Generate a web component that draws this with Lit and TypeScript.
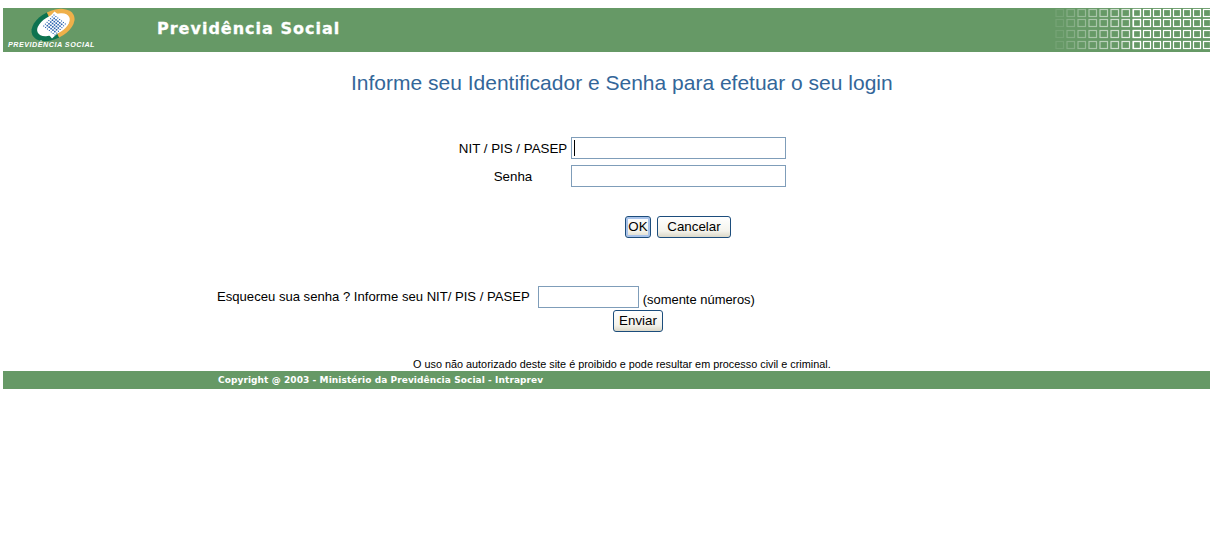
import { LitElement, html, css, svg } from "lit";
import { customElement } from "lit/decorators.js";

const ROWS = [1.5, 11.5, 22.5, 33.5];
const COLS: number[] = [];
for (let i = 0; i < 8; i++) COLS.push(1 + i * 11);
for (let i = 0; i < 8; i++) COLS.push(78.5 + i * 10);

const DOTS: [number, number, number][] = [];
for (let a = -3; a <= 3; a++) {
  for (let b = -3; b <= 3; b++) {
    const edge = Math.max(Math.abs(a), Math.abs(b));
    DOTS.push([
      54.5 + (a * 6.6 - b * 6) / 3.5,
      25 + (a * 5.2 + b * 6.4) / 3.5,
      edge === 3 ? 1.1 : 1.6,
    ]);
  }
}

@customElement("app-root")
export class AppRoot extends LitElement {
  static styles = css`
    :host {
      display: block;
      height: 543px;
      padding: 8px 0 0 3px;
      box-sizing: border-box;
      background: #fff;
      font-family: "Liberation Sans", Arial, sans-serif;
      font-size: 13.33px;
      color: #000;
      overflow: hidden;
    }
    .header {
      height: 44px;
      background: #669966;
      display: flex;
      align-items: flex-start;
      justify-content: space-between;
    }
    .brand { display: flex; align-items: flex-start; }
    .logo { display: block; }
    .brand-name {
      margin: 11px 0 0 44px;
      font-family: "DejaVu Sans", Verdana, sans-serif;
      font-weight: 700;
      font-size: 16px;
      line-height: 20px;
      letter-spacing: 1px;
      -webkit-text-stroke: 0.3px #fff;
      color: #fff;
    }
    .squares { display: block; }
    h1 {
      margin: 19px 0 0;
      padding-left: 348px;
      font-size: 21px;
      line-height: 23px;
      font-weight: 400;
      color: #336699;
    }
    .login { margin-top: 43px; }
    .field {
      display: grid;
      grid-template-columns: 110px auto;
      justify-content: start;
      align-items: center;
      margin-left: 455px;
      margin-bottom: 6px;
    }
    .field label { text-align: center; white-space: nowrap; }
    .box {
      display: block;
      box-sizing: border-box;
      height: 22px;
      border: 1px solid #7f9db9;
      background: #fff;
      padding: 0;
      margin: 0;
      outline: none;
    }
    .wide { width: 215px; }
    .narrow { width: 101px; }
    .input-wrap { position: relative; margin-left: 3px; }
    .caret {
      position: absolute;
      left: 3px;
      top: 3px;
      width: 1px;
      height: 16px;
      background: #000;
    }
    .actions {
      display: flex;
      gap: 6px;
      margin: 29px 0 0 622px;
    }
    button {
      box-sizing: border-box;
      height: 22px;
      padding: 0 0 1px;
      border: 1px solid #1c4d7c;
      border-radius: 3px;
      background: linear-gradient(#ffffff, #f4f3ec 70%, #dcd8c8);
      font: 13.33px "Liberation Sans", Arial, sans-serif;
      color: #000;
    }
    .ok { width: 26px; box-shadow: inset 0 0 0 2px #a9c3ea; }
    .cancel { width: 74px; }
    .send { width: 50px; display: block; margin: 2px 0 0 610px; }
    .forgot {
      display: flex;
      margin: 48px 0 0 214px;
      align-items: flex-start;
      height: 22px;
    }
    .forgot-label { line-height: 22px; font-size: 13.1px; }
    .forgot .box { margin-left: 8px; }
    .hint { margin: 6px 0 0 4px; line-height: 16px; font-size: 12.95px; }
    .notice {
      margin: 26px 0 0;
      padding-left: 410px;
      font-size: 10.85px;
      line-height: 13px;
      height: 13px;
      white-space: nowrap;
    }
    .footer {
      height: 18px;
      background: #669966;
      padding-left: 215px;
      font-family: "DejaVu Sans", Verdana, sans-serif;
      font-weight: 700;
      font-size: 9px;
      line-height: 18px;
      letter-spacing: 0.08px;
      color: #fff;
      white-space: nowrap;
    }
  `;

  private logo() {
    return html`<svg class="logo" width="110" height="44" viewBox="3 8 110 44" aria-hidden="true">
      <g transform="rotate(-26 53 25)">
        <path d="M53 11 A23 14 0 0 0 53 39 Z" fill="#0d7350" />
        <path d="M53 11 A23 14 0 0 1 53 39 Z" fill="#efb04a" />
        <ellipse cx="53.5" cy="25" rx="17.5" ry="9.5" fill="#fff" />
      </g>
      <path d="M54.5 11.5 L69 23 L52 38.5 L41 26 Z" fill="#fff" />
      ${DOTS.map(([x, y, s]) => svg`<rect x=${x - s / 2} y=${y - s / 2} width=${s} height=${s} fill="#2b62ae" />`)}
      <text x="8" y="47" fill="#fff" font-family="'Liberation Sans', Arial, sans-serif"
        font-size="7.2" font-weight="700" font-style="italic" letter-spacing="0.5">PREVIDÊNCIA SOCIAL</text>
    </svg>`;
  }

  private squares() {
    return html`<svg class="squares" width="155" height="44" viewBox="0 0 155 44" aria-hidden="true">
      ${ROWS.flatMap((y) =>
        COLS.map((x, i) => {
          const op = Math.min(1, 0.1 + (i / 8) * 0.9);
          return svg`<rect x=${x} y=${y} width=${i < 8 ? 7.5 : 7} height="7" fill="none" stroke="#fff"
            stroke-width="1.2" opacity=${op} />`;
        })
      )}
    </svg>`;
  }

  render() {
    return html`
      <header class="header">
        <div class="brand">
          ${this.logo()}
          <div class="brand-name">Previdência Social</div>
        </div>
        ${this.squares()}
      </header>
      <h1>Informe seu Identificador e Senha para efetuar o seu login</h1>
      <form class="login" @submit=${(e: Event) => e.preventDefault()}>
        <div class="field">
          <label for="nit">NIT / PIS / PASEP</label>
          <div class="input-wrap">
            <input id="nit" class="box wide" type="text" />
            <span class="caret"></span>
          </div>
        </div>
        <div class="field">
          <label for="senha">Senha</label>
          <div class="input-wrap"><input id="senha" class="box wide" type="password" /></div>
        </div>
        <div class="actions">
          <button class="ok" type="submit">OK</button>
          <button class="cancel" type="button">Cancelar</button>
        </div>
      </form>
      <div class="forgot">
        <span class="forgot-label">Esqueceu sua senha ? Informe seu NIT/ PIS / PASEP</span>
        <input class="box narrow" type="text" />
        <span class="hint">(somente números)</span>
      </div>
      <button class="send" type="button">Enviar</button>
      <div class="notice">O uso não autorizado deste site é proibido e pode resultar em processo civil e criminal.</div>
      <footer class="footer">Copyright @ 2003 - Ministério da Previdência Social - Intraprev</footer>
    `;
  }
}
